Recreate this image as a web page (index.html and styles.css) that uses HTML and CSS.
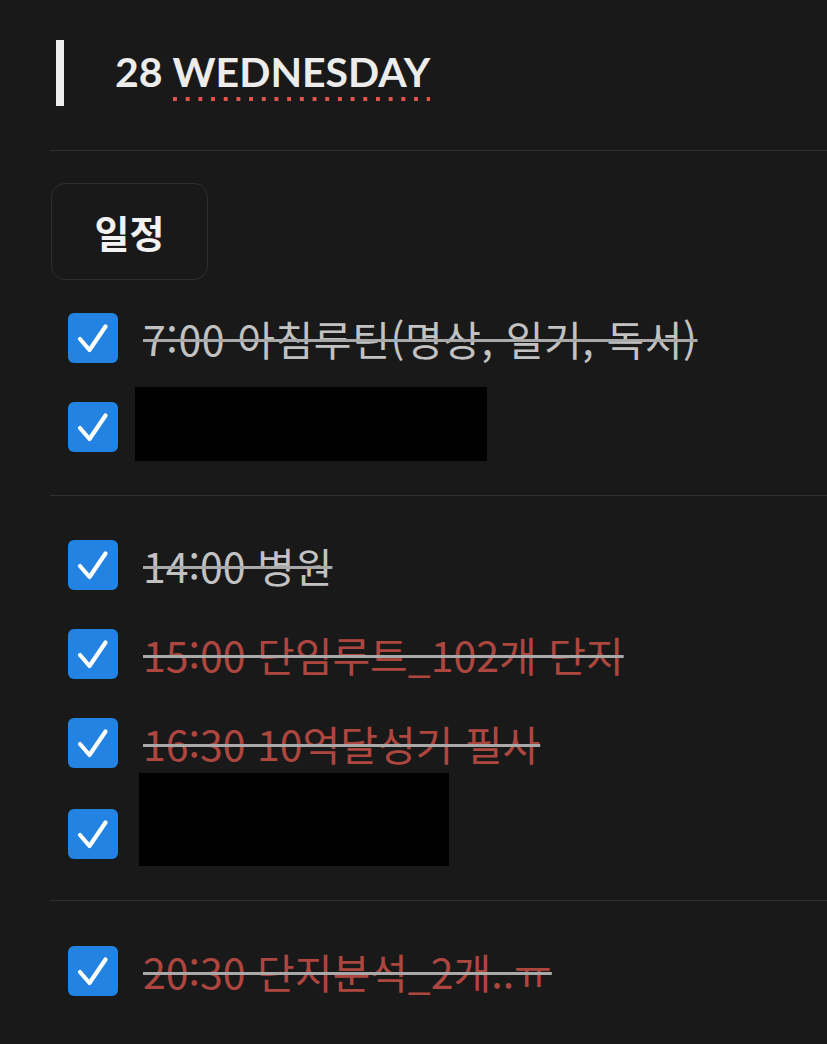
FILE: index.html
```html
<!DOCTYPE html>
<html lang="ko">
<head>
<meta charset="utf-8">
<title>28 WEDNESDAY</title>
<link rel="stylesheet" href="styles.css">
</head>
<body>
<main class="page">
  <header class="header">
    <div class="bar"></div>
    <h1 class="title">28 <span class="spell">WEDNESDAY</span></h1>
  </header>
  <div class="divider divider-top"></div>

  <div class="tag">일정</div>

  <section class="group group-first">
    <div class="row">
      <span class="cb"><svg viewBox="0 0 50 50"><path d="M12 26 L21.5 37 L37.5 13.5"/></svg></span>
      <span class="done wide">7:00 아침루틴(명상, 일기, 독서)</span>
    </div>
    <div class="row">
      <span class="cb"><svg viewBox="0 0 50 50"><path d="M12 26 L21.5 37 L37.5 13.5"/></svg></span>
      <span class="redact redact-a"></span>
    </div>
  </section>

  <div class="divider divider-mid"></div>

  <section class="group group-second">
    <div class="row">
      <span class="cb"><svg viewBox="0 0 50 50"><path d="M12 26 L21.5 37 L37.5 13.5"/></svg></span>
      <span class="done">14:00 병원</span>
    </div>
    <div class="row">
      <span class="cb"><svg viewBox="0 0 50 50"><path d="M12 26 L21.5 37 L37.5 13.5"/></svg></span>
      <span class="done"><span class="red">15:00 단임루트_102개 단지</span></span>
    </div>
    <div class="row">
      <span class="cb"><svg viewBox="0 0 50 50"><path d="M12 26 L21.5 37 L37.5 13.5"/></svg></span>
      <span class="done"><span class="red">16:30 10억달성기 필사</span></span>
    </div>
    <div class="row row-tall">
      <span class="cb"><svg viewBox="0 0 50 50"><path d="M12 26 L21.5 37 L37.5 13.5"/></svg></span>
      <span class="redact redact-b"></span>
    </div>
  </section>

  <div class="divider divider-low"></div>

  <section class="group group-third">
    <div class="row">
      <span class="cb"><svg viewBox="0 0 50 50"><path d="M12 26 L21.5 37 L37.5 13.5"/></svg></span>
      <span class="done"><span class="red">20:30 단지분석_2개..ㅠ</span></span>
    </div>
  </section>
</main>
</body>
</html>
```

FILE: styles.css
```css
html, body {
  margin: 0;
  padding: 0;
  background: #191919;
}

body {
  font-family: "Noto Sans CJK KR", "Noto Sans", sans-serif;
  color: #e6e6e6;
  overflow: hidden;
}

.page {
  padding: 40px 0 0 50px;
}

.header {
  display: flex;
  align-items: flex-start;
  height: 66px;
  padding-left: 6px;
}

.bar {
  width: 8px;
  height: 66px;
  background: #ededed;
  flex: none;
}

.title {
  margin: 11px 0 0 51px;
  font-family: "Lato", "Noto Sans", sans-serif;
  font-weight: 700;
  font-size: 41px;
  line-height: 42px;
  color: #ececec;
  white-space: nowrap;
}

.spell {
  display: inline-block;
  line-height: 42px;
  padding-bottom: 8px;
  background-image: linear-gradient(90deg, #e2544c 4px, transparent 4px);
  background-size: 12.7px 4px;
  background-repeat: repeat-x;
  background-position: 0 100%;
}

.divider {
  height: 1px;
  background: #2f2f2f;
}

.divider-top {
  margin-top: 44px;
}

.tag {
  margin: 32px 0 0 1px;
  width: 155px;
  height: 95px;
  border: 1px solid #2e2e2e;
  border-radius: 14px;
  display: flex;
  align-items: center;
  justify-content: center;
  font-size: 38px;
  font-weight: 700;
  color: #f2f2f2;
}

.group-first {
  margin-top: 13px;
}

.divider-mid {
  margin-top: 24px;
}

.group-second {
  margin-top: 24px;
}

.divider-low {
  margin-top: 20px;
}

.group-third {
  margin-top: 25px;
}

.row {
  display: flex;
  align-items: center;
  height: 89px;
  padding-left: 18px;
}

.row-tall {
  height: 93px;
}

.cb {
  flex: none;
  width: 50px;
  height: 50px;
  border-radius: 6px;
  background: #2383e2;
  margin-right: 25px;
  display: flex;
}

.cb svg {
  width: 50px;
  height: 50px;
  fill: none;
  stroke: #ffffff;
  stroke-width: 4.2;
  stroke-linecap: round;
  stroke-linejoin: round;
}

.done {
  font-size: 41px;
  line-height: 50px;
  color: #c2c2c2;
  text-decoration: line-through;
  text-decoration-thickness: 3px;
  text-decoration-color: #a9a9a9;
  white-space: nowrap;
}

.wide {
  letter-spacing: 0.6px;
}

.red {
  color: #ae4640;
}

.redact {
  display: block;
  background: #000000;
  flex: none;
}

.redact-a {
  width: 352px;
  height: 74px;
  margin-left: -8px;
  margin-bottom: 5px;
}

.redact-b {
  width: 310px;
  height: 93px;
  margin-left: -4px;
  margin-bottom: 28px;
}
```
